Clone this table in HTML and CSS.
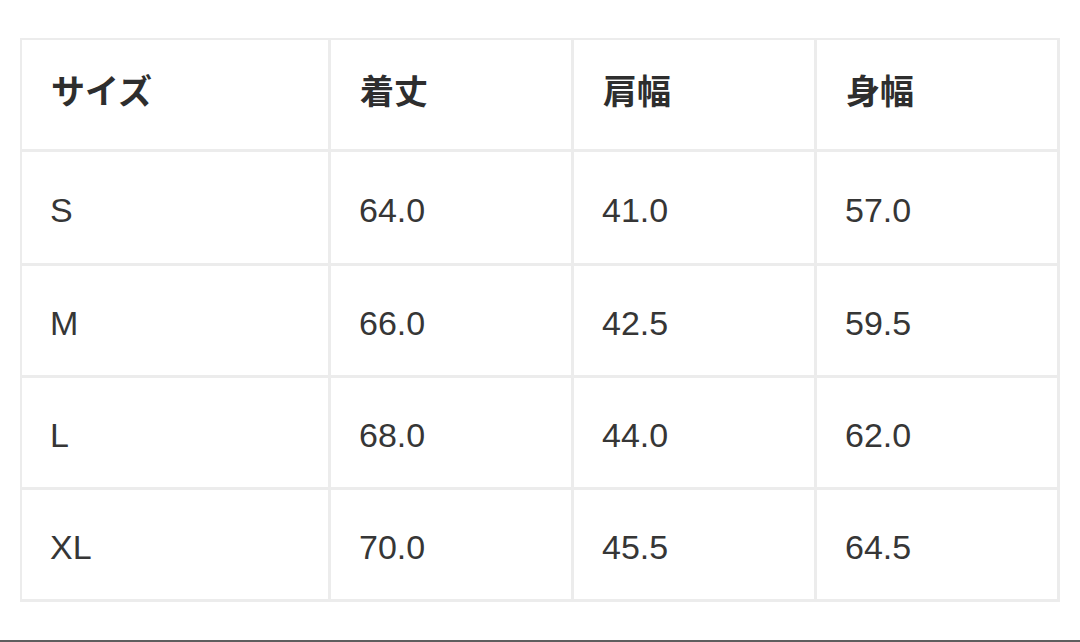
FILE: index.html
```html
<!DOCTYPE html>
<html lang="ja">
<head>
<meta charset="utf-8">
<link rel="stylesheet" href="styles.css">
</head>
<body>
<div class="page">
  <table class="size-table">
    <thead>
      <tr class="row-head">
        <th class="col-size">サイズ</th>
        <th>着丈</th>
        <th>肩幅</th>
        <th>身幅</th>
      </tr>
    </thead>
    <tbody>
      <tr class="row-tall"><td>S</td><td>64.0</td><td>41.0</td><td>57.0</td></tr>
      <tr class="row"><td>M</td><td>66.0</td><td>42.5</td><td>59.5</td></tr>
      <tr class="row"><td>L</td><td>68.0</td><td>44.0</td><td>62.0</td></tr>
      <tr class="row"><td>XL</td><td>70.0</td><td>45.5</td><td>64.5</td></tr>
    </tbody>
  </table>
</div>
</body>
</html>
```
FILE: styles.css
```css
html, body {
  margin: 0;
  padding: 0;
  background: #ffffff;
}
.page {
  height: 642px;
  border-bottom: 2px solid #5e5e5e;
  padding: 38px 0 0 20px;
  box-sizing: border-box;
}
.size-table {
  border-collapse: separate;
  border-spacing: 0;
  width: 1040px;
  table-layout: fixed;
  border-top: 2px solid #ececec;
  border-left: 2px solid #ececec;
  color: #333333;
}
.size-table th,
.size-table td {
  border-right: 3px solid #ececec;
  border-bottom: 3px solid #ececec;
  padding: 0 0 0 29px;
  text-align: left;
  vertical-align: middle;
}
.size-table th {
  font-family: "Noto Sans CJK JP", "Noto Sans", sans-serif;
  font-weight: 700;
  font-size: 34px;
  color: #2e2e2e;
  padding-bottom: 10px;
}
.size-table td {
  font-family: "Liberation Sans", Arial, sans-serif;
  font-weight: 400;
  font-size: 34px;
  padding-top: 6px;
  padding-left: 28px;
  color: #363636;
}
.col-size {
  width: 309px;
  box-sizing: border-box;
}
.row-head { height: 112px; }
.row-tall { height: 114px; }
.row { height: 112px; }
```
